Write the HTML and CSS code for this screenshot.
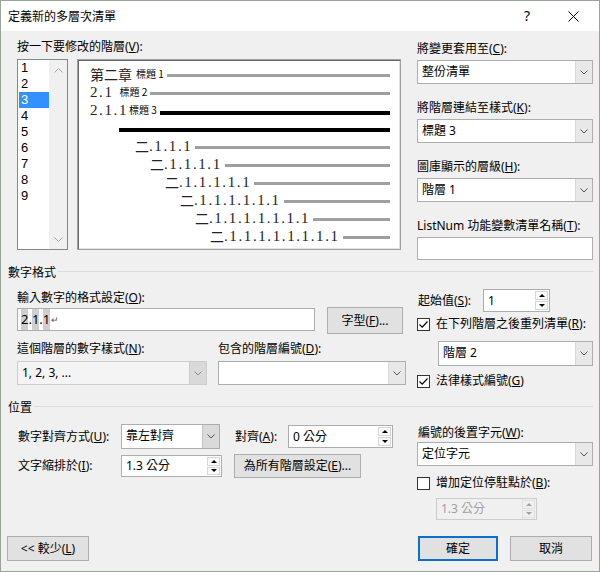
FILE: index.html
```html
<!DOCTYPE html>
<html lang="zh-Hant">
<head>
<meta charset="utf-8">
<title>定義新的多層次清單</title>
<link rel="stylesheet" href="styles.css">
</head>
<body>
<div class="dialog">
  <div class="titlebar">
    <div class="title">定義新的多層次清單</div>
    <div class="tb-btn help">?</div>
    <div class="tb-btn close"><svg width="11" height="11" viewBox="0 0 11 11"><path d="M0.5 0.5L10.5 10.5M10.5 0.5L0.5 10.5" stroke="#000" stroke-width="1"/></svg></div>
  </div>
  <div class="content">
    <div class="sec top">
      <div class="col-l">
        <div class="lbl l-pick">按一下要修改的階層(<u>V</u>):</div>
        <div class="pick">
          <div class="levels">
            <div class="items">
              <div class="item">1</div>
              <div class="item">2</div>
              <div class="item sel">3</div>
              <div class="item">4</div>
              <div class="item">5</div>
              <div class="item">6</div>
              <div class="item">7</div>
              <div class="item">8</div>
              <div class="item">9</div>
            </div>
            <div class="vscroll">
              <svg width="9" height="5" viewBox="0 0 9 5"><path d="M0.5 4.5L4.5 0.5L8.5 4.5" fill="none" stroke="#a6a6a6" stroke-width="1"/></svg>
              <svg width="9" height="5" viewBox="0 0 9 5"><path d="M0.5 0.5L4.5 4.5L8.5 0.5" fill="none" stroke="#a6a6a6" stroke-width="1"/></svg>
            </div>
          </div>
          <div class="preview">
            <div class="prow"><span class="cjk">第二章</span><span class="hd g4">標題 1</span><i class="bar gray"></i></div>
            <div class="prow"><span class="num">2.1</span><span class="hd g6">標題 2</span><i class="bar gray"></i></div>
            <div class="prow"><span class="num">2.1.1</span><span class="hd g0">標題 3</span><i class="bar black low"></i></div>
            <div class="prow lv4"><i class="bar black low2"></i></div>
            <div class="prow lv5"><span class="cjk">二</span><span class="num">.1.1.1</span><i class="bar gray"></i></div>
            <div class="prow lv6"><span class="cjk">二</span><span class="num">.1.1.1.1</span><i class="bar gray"></i></div>
            <div class="prow lv7"><span class="cjk">二</span><span class="num">.1.1.1.1.1</span><i class="bar gray"></i></div>
            <div class="prow lv8"><span class="cjk">二</span><span class="num">.1.1.1.1.1.1</span><i class="bar gray"></i></div>
            <div class="prow lv9"><span class="cjk">二</span><span class="num">.1.1.1.1.1.1.1</span><i class="bar gray"></i></div>
            <div class="prow lv10"><span class="cjk">二</span><span class="num">.1.1.1.1.1.1.1.1</span><i class="bar gray"></i></div>
          </div>
        </div>
      </div>
      <div class="col-r">
        <div class="field">
          <div class="lbl">將變更套用至(<u>C</u>):</div>
          <div class="combo"><span class="val">整份清單</span><span class="dd"><svg width="8" height="5" viewBox="0 0 8 5"><path d="M0.5 0.5L4 4L7.5 0.5" fill="none" stroke="#555" stroke-width="1"/></svg></span></div>
        </div>
        <div class="field">
          <div class="lbl">將階層連結至樣式(<u>K</u>):</div>
          <div class="combo"><span class="val">標題 3</span><span class="dd"><svg width="8" height="5" viewBox="0 0 8 5"><path d="M0.5 0.5L4 4L7.5 0.5" fill="none" stroke="#555" stroke-width="1"/></svg></span></div>
        </div>
        <div class="field">
          <div class="lbl">圖庫顯示的層級(<u>H</u>):</div>
          <div class="combo"><span class="val">階層 1</span><span class="dd"><svg width="8" height="5" viewBox="0 0 8 5"><path d="M0.5 0.5L4 4L7.5 0.5" fill="none" stroke="#555" stroke-width="1"/></svg></span></div>
        </div>
        <div class="field last">
          <div class="lbl">ListNum 功能變數清單名稱(<u>T</u>):</div>
          <div class="textbox tb-list"></div>
        </div>
      </div>
    </div>

    <div class="sechead h-num"><span>數字格式</span><i class="rule"></i></div>
    <div class="sec sec1">
      <div class="col-l">
        <div class="lbl l-fmt">輸入數字的格式設定(<u>O</u>):</div>
        <div class="fmt-row">
          <div class="textbox fmt"><span class="fc">2</span>.<span class="fc">1</span>.<span class="fc">1</span><span class="ret">↵</span></div>
          <div class="btn b-font">字型(<u>F</u>)...</div>
        </div>
        <div class="style-row">
          <div class="sfield f1">
            <div class="lbl">這個階層的數字樣式(<u>N</u>):</div>
            <div class="combo disabled"><span class="val">1, 2, 3, ...</span><span class="dd"><svg width="8" height="5" viewBox="0 0 8 5"><path d="M0.5 0.5L4 4L7.5 0.5" fill="none" stroke="#8c8c8c" stroke-width="1"/></svg></span></div>
          </div>
          <div class="sfield f2">
            <div class="lbl">包含的階層編號(<u>D</u>):</div>
            <div class="combo"><span class="val"></span><span class="dd"><svg width="8" height="5" viewBox="0 0 8 5"><path d="M0.5 0.5L4 4L7.5 0.5" fill="none" stroke="#555" stroke-width="1"/></svg></span></div>
          </div>
        </div>
      </div>
      <div class="col-r">
        <div class="start-row">
          <span class="lbl w-start">起始值(<u>S</u>):</span>
          <div class="spin s-start"><span class="val">1</span><span class="arrows"><span class="up"></span><span class="dn"></span></span></div>
        </div>
        <div class="chk-row c-restart">
          <span class="cb on"><svg width="11" height="11" viewBox="0 0 11 11"><path d="M1.5 5.5L4.2 8.2L9.5 2.5" fill="none" stroke="#000" stroke-width="1.2"/></svg></span>
          <span class="chk-lbl">在下列階層之後重列清單(<u>R</u>):</span>
        </div>
        <div class="combo c-restart-sel"><span class="val">階層 2</span><span class="dd"><svg width="8" height="5" viewBox="0 0 8 5"><path d="M0.5 0.5L4 4L7.5 0.5" fill="none" stroke="#555" stroke-width="1"/></svg></span></div>
        <div class="chk-row c-legal">
          <span class="cb on"><svg width="11" height="11" viewBox="0 0 11 11"><path d="M1.5 5.5L4.2 8.2L9.5 2.5" fill="none" stroke="#000" stroke-width="1.2"/></svg></span>
          <span class="chk-lbl">法律樣式編號(<u>G</u>)</span>
        </div>
      </div>
    </div>

    <div class="sechead h-pos"><span>位置</span><i class="rule"></i></div>
    <div class="sec sec2">
      <div class="col-l">
        <div class="pos-row r1">
          <span class="lbl w-pl">數字對齊方式(<u>U</u>):</span>
          <div class="combo c-align"><span class="val">靠左對齊</span><span class="dd dark"><svg width="8" height="5" viewBox="0 0 8 5"><path d="M0.5 0.5L4 4L7.5 0.5" fill="none" stroke="#555" stroke-width="1"/></svg></span></div>
          <span class="lbl w-at">對齊(<u>A</u>):</span>
          <div class="spin s-at"><span class="val">0 公分</span><span class="arrows"><span class="up"></span><span class="dn"></span></span></div>
        </div>
        <div class="pos-row r2">
          <span class="lbl w-pl">文字縮排於(<u>I</u>):</span>
          <div class="spin s-ind"><span class="val">1.3 公分</span><span class="arrows"><span class="up"></span><span class="dn"></span></span></div>
          <div class="btn b-all">為所有階層設定(<u>E</u>)...</div>
        </div>
      </div>
      <div class="col-r">
        <div class="lbl l-after">編號的後置字元(<u>W</u>):</div>
        <div class="combo c-after"><span class="val">定位字元</span><span class="dd"><svg width="8" height="5" viewBox="0 0 8 5"><path d="M0.5 0.5L4 4L7.5 0.5" fill="none" stroke="#555" stroke-width="1"/></svg></span></div>
        <div class="chk-row c-tab">
          <span class="cb"></span>
          <span class="chk-lbl">增加定位停駐點於(<u>B</u>):</span>
        </div>
        <div class="spin s-tab disabled"><span class="val">1.3 公分</span><span class="arrows"><span class="up"></span><span class="dn"></span></span></div>
      </div>
    </div>

    <div class="footer">
      <div class="btn b-less">&lt;&lt; 較少(<u>L</u>)</div>
      <div class="btn b-ok">確定</div>
      <div class="btn b-cancel">取消</div>
    </div>
  </div>
</div>
</body>
</html>
```

FILE: styles.css
```css
* { box-sizing: border-box; margin: 0; padding: 0; }
body {
  margin: 0;
  font-family: "Noto Sans", "Noto Sans CJK TC", sans-serif;
  font-size: 12px;
  line-height: 14px;
  color: #000;
  background: #fff;
}
u { text-decoration: underline; text-underline-offset: 1px; }

.dialog {
  width: 600px;
  height: 572px;
  border: 1px solid #9aa59a;
  background: #f0f0f0;
  display: flex;
  flex-direction: column;
}

/* title bar */
.titlebar {
  flex: none;
  height: 30px;
  background: #fff;
  display: flex;
  align-items: center;
}
.title { flex: 1; padding-left: 7px; font-family: "Noto Sans CJK TC", sans-serif; }
.tb-btn { width: 46px; height: 30px; display: flex; align-items: center; justify-content: center; }
.help { font-size: 14px; }
.close { margin-right: 3px; }

.content { padding: 0 6px 0 7px; flex: 1; display: flex; flex-direction: column; }

.sec { display: flex; padding-left: 9px; }
.col-l { width: 389px; flex: none; }
.col-r { width: 176px; flex: none; margin-left: 11px; }

.lbl { display: block; height: 14px; line-height: 14px; white-space: nowrap; }

/* top */
.l-pick { margin-top: 9px; margin-bottom: 5px; }
.pick { display: flex; height: 191px; }
.levels {
  width: 51px;
  border: 1px solid #828790;
  background: #fff;
  display: flex;
}
.items { width: 31px; padding-left: 1px; }
.item {
  height: 16px;
  line-height: 16px;
  padding-left: 2px;
  font-family: "Liberation Sans", sans-serif;
  font-size: 13px;
}
.item.sel { background: #3390ff; color: #fff; }
.vscroll {
  flex: 1;
  background: #f0f0f0;
  display: flex;
  flex-direction: column;
  justify-content: space-between;
  align-items: center;
  padding: 8px 0 7px;
}

.preview {
  margin-left: 9px;
  width: 324px;
  background: #fff;
  border: 1px solid #a0a0a0;
  box-shadow: inset 1px 1px 0 #696969, inset -1px -1px 0 #e3e3e3;
  padding: 5px 10px 0 12px;
}
.prow { height: 18px; display: flex; align-items: center; white-space: nowrap; }
.prow .cjk { font-family: "Noto Sans CJK TC", sans-serif; font-size: 14px; line-height: 18px; color: #222; }
.prow .num { font-family: "Liberation Serif", serif; font-size: 15px; letter-spacing: 1.6px; line-height: 18px; color: #222; }
.prow .hd { font-family: "Noto Sans CJK TC", sans-serif; font-size: 10px; line-height: 18px; }
.g4 { margin-left: 4px; }
.g6 { margin-left: 6px; }
.g0 { margin-left: 1px; }
.bar { display: block; flex: 1; margin-left: 3px; }
.bar.gray { height: 3px; background: #a0a0a0; margin-top: 2px; }
.bar.black { height: 4px; background: #000; }
.bar.low { margin-top: 5px; }
.bar.low2 { margin-top: 4px; margin-left: 0; }
.lv4 { padding-left: 29px; }
.lv5 { padding-left: 45px; }
.lv6 { padding-left: 60px; }
.lv7 { padding-left: 75px; }
.lv8 { padding-left: 90px; }
.lv9 { padding-left: 105px; }
.lv10 { padding-left: 120px; }

.top .col-r { padding-top: 11px; }
.field { margin-bottom: 17px; }
.field.last { margin-bottom: 0; }
.field .lbl { margin-bottom: 4px; }

/* controls */
.combo {
  height: 24px;
  border: 1px solid #adadad;
  background: #fff;
  display: flex;
  align-items: stretch;
}
.combo .val { flex: 1; padding-left: 4px; line-height: 22px; white-space: nowrap; overflow: hidden; }
.combo .dd {
  width: 17px;
  flex: none;
  border-left: 1px solid #d9d9d9;
  background: #e8e8e8;
  display: flex;
  align-items: center;
  justify-content: center;
}
.combo .dd.dark { background: #dadada; border-left-color: #c4c4c4; }
.combo.disabled { background: #f4f4f4; border-color: #cccccc; }
.combo.disabled .dd { background: #d9d9d9; border-left-color: #cccccc; }

.textbox { background: #fff; border: 1px solid #adadad; }
.tb-list { height: 23px; }

.btn {
  background: #e1e1e1;
  border: 1px solid #adadad;
  display: flex;
  align-items: center;
  justify-content: center;
  white-space: nowrap;
}

.spin {
  border: 1px solid #adadad;
  background: #fff;
  display: flex;
  align-items: stretch;
}
.spin .val { flex: 1; padding-left: 4px; display: flex; align-items: center; white-space: nowrap; }
.spin .arrows {
  width: 14px;
  flex: none;
  display: flex;
  flex-direction: column;
  padding: 1px 1px 1px 0;
  gap: 1px;
}
.spin .arrows span {
  flex: 1;
  border: 1px solid #d6d6d6;
  background: #fafafa;
  display: flex;
  align-items: center;
  justify-content: center;
}
.spin .up::after {
  content: "";
  border-left: 3px solid transparent;
  border-right: 3px solid transparent;
  border-bottom: 3px solid #000;
}
.spin .dn::after {
  content: "";
  border-left: 3px solid transparent;
  border-right: 3px solid transparent;
  border-top: 3px solid #000;
}
.spin.disabled { background: #f0f0f0; border-color: #cccccc; color: #a0a0a0; }
.spin.disabled .up::after { border-bottom-color: #a0a0a0; }
.spin.disabled .dn::after { border-top-color: #a0a0a0; }
.spin.disabled .arrows span { background: #f0f0f0; border-color: #e0e0e0; }

.cb {
  width: 13px;
  height: 13px;
  flex: none;
  border: 1px solid #333;
  background: #fff;
  display: flex;
  align-items: center;
  justify-content: center;
}
.chk-row { display: flex; align-items: center; height: 14px; }
.chk-lbl { margin-left: 6px; white-space: nowrap; }

/* section heads */
.sechead { display: flex; height: 14px; line-height: 14px; }
.sechead .rule { display: block; flex: 1; height: 1px; background: #dcdcdc; margin-top: 5px; margin-left: 2px; }
.h-num { margin-top: 6px; }
.h-pos { margin-top: 13px; }

/* number format */
.l-fmt { margin-top: 11px; margin-bottom: 2px; }
.fmt-row { display: flex; align-items: flex-start; height: 27px; }
.fmt { width: 298px; height: 23px; margin-top: 1px; padding-left: 3px; font-size: 13px; line-height: 21px; display: flex; align-items: center; }
.fc { background: #cfcfcf; }
.ret { font-size: 9px; color: #555; margin-left: 1px; }
.b-font { width: 76px; height: 27px; margin-left: 12px; }
.style-row { display: flex; margin-top: 8px; }
.sfield .lbl { margin-bottom: 5px; }
.f1 { width: 190px; }
.f2 { width: 188px; margin-left: 11px; }

.start-row { display: flex; align-items: center; margin-top: 9px; height: 23px; }
.w-start { width: 66px; padding-left: 1px; }
.s-start { width: 67px; height: 23px; }
.c-restart { margin-top: 5px; }
.c-restart-sel { height: 25px; margin-top: 10px; margin-left: 21px; }
.c-legal { margin-top: 8px; }

/* position */
.pos-row { display: flex; align-items: center; }
.r1 { margin-top: 9px; height: 25px; }
.r2 { margin-top: 5px; height: 24px; }
.w-pl { width: 104px; padding-left: 1px; }
.c-align { width: 99px; height: 25px; }
.w-at { width: 53px; margin-left: 15px; }
.s-at { width: 105px; height: 23px; }
.s-ind { width: 101px; height: 22px; }
.b-all { width: 127px; height: 24px; margin-left: 12px; }

.l-after { margin-top: 11px; margin-bottom: 2px; padding-left: 1px; }
.c-after { height: 24px; }
.c-tab { margin-top: 10px; }
.s-tab { width: 101px; height: 22px; margin-top: 8px; margin-left: 19px; }

/* footer */
.footer { display: flex; margin-top: 16px; }
.footer .btn { height: 25px; }
.b-less { width: 82px; margin-left: -1px; }
.b-ok { width: 80px; margin-left: auto; border: 2px solid #0a6fd0; }
.b-cancel { width: 82px; margin-left: 12px; margin-right: 1px; }
```
